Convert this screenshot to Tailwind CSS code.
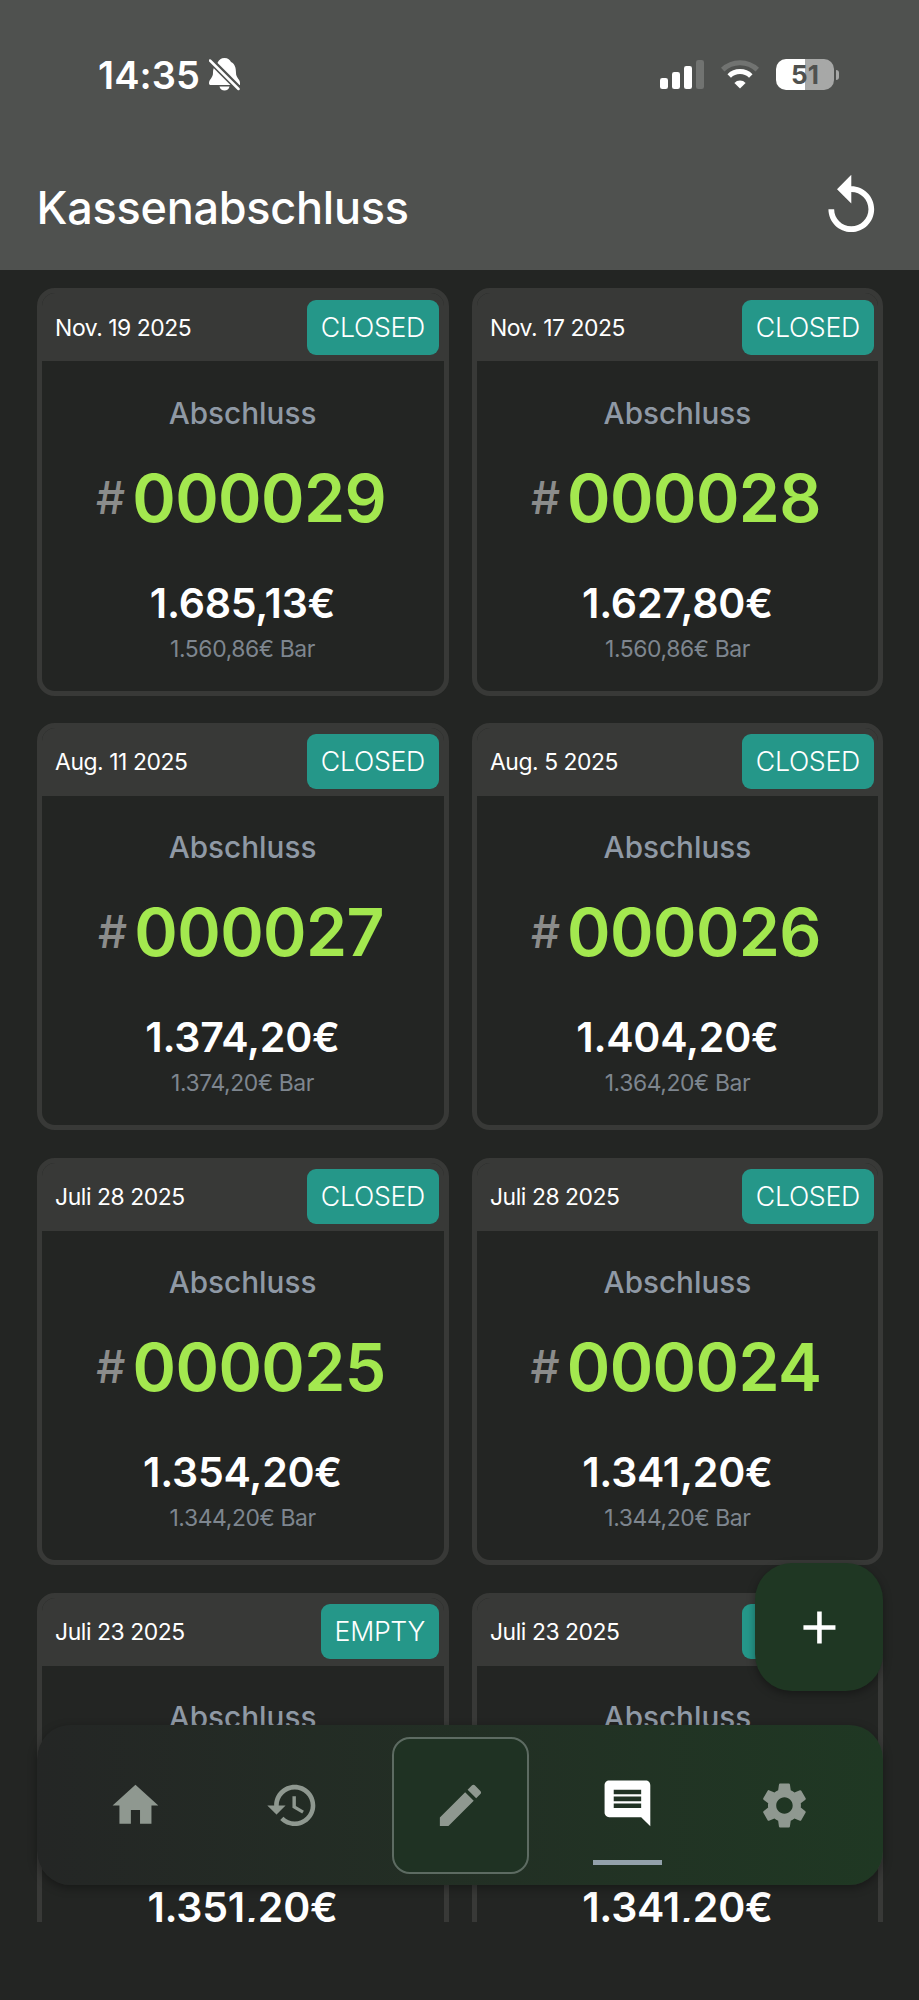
<!DOCTYPE html>
<html lang="de">
<head>
  <meta charset="UTF-8" />
  <meta name="viewport" content="width=device-width, initial-scale=1.0" />
  <title>Kassenabschluss</title>
  <script src="https://cdn.jsdelivr.net/npm/@tailwindcss/browser@4"></script>
</head>
<body class="bg-[#232523] font-['Inter',sans-serif] text-white h-[2000px] overflow-hidden relative">

  <header class="bg-[#4f514f] h-[270px] flex flex-col">
    <!-- Status bar -->
    <div class="flex items-center justify-between pt-[52px] pl-[98px] pr-[80px] h-[97px]">
      <div class="flex items-center gap-[9px]">
        <span class="w-[102px] text-[38px] leading-[46px] font-semibold tracking-[0.1px]">14:35</span>
        <svg class="w-[31px] h-[33px]" viewBox="0 0 31 33" fill="#fff">
          <path d="M15.5 0C19 0 21 2 22 4c4 2 5 6 5 11 0 5 4 6 4 10v2H2c-1.500 0-2-.6-2-2 0-4 4-5 4-10 0-1.500 0-3 .6-4.500L9 4c1-2 3-4 6.500-4z" />
          <path d="M10.500 28.500h10c-.5 2.500-2.500 4-5 4s-4.500-1.500-5-4z" />
          <path d="M-1 0L32 33" stroke="#4f514f" stroke-width="6.500" />
          <path d="M1 2.500L29.500 31" stroke="#fff" stroke-width="2.500" stroke-linecap="round" />
        </svg>
      </div>
      <div class="flex items-center">
        <svg class="w-[44px] h-[29px] mr-[17px]" viewBox="0 0 44 29" fill="#fff">
          <rect x="0" y="18" width="8" height="11" rx="2.300" />
          <rect x="12" y="12" width="8" height="17" rx="2.300" />
          <rect x="24" y="6" width="8" height="23" rx="2.300" />
          <rect x="36" y="0" width="8" height="29" rx="2.300" fill="#717371" />
        </svg>
        <svg class="w-[38px] h-[29px] mr-[17px]" viewBox="0 0 38 29" fill="none">
          <path d="M1.700 9.600a25 25 0 0 1 34.600 0" stroke="#717371" stroke-width="5" />
          <path d="M8.200 16a15.500 15.500 0 0 1 21.600 0" stroke="#fff" stroke-width="5" />
          <path d="M19 28.500l-5.600-5.600a8 8 0 0 1 11.200 0z" fill="#fff" />
        </svg>
        <div class="flex items-center gap-[2px]">
          <div class="w-[58px] h-[31px] rounded-[10px] bg-linear-to-r from-white from-50% to-[#a7a8a7] to-50% flex items-center justify-center text-[26px] leading-none font-bold text-[#4f514f]">51</div>
          <div class="w-[3px] h-[10px] rounded-r-full bg-[#a7a8a7]"></div>
        </div>
      </div>
    </div>
    <!-- Title -->
    <div class="flex items-center justify-between h-[69px] mt-[75px] pl-[36.500px] pr-[33px]">
      <h1 class="pt-px text-[45px] leading-[69px] font-[450] tracking-[-0.250px]">Kassenabschluss</h1>
      <svg class="w-[68.600px] h-[68.600px]" viewBox="0 0 24 24" fill="#fff"><path d="M12 5V1L7 6l5 5V7c3.310 0 6 2.690 6 6s-2.690 6-6 6-6-2.690-6-6H4c0 4.420 3.580 8 8 8s8-3.580 8-8-3.580-8-8-8z" /></svg>
    </div>
  </header>

  <main class="h-[1651.700px] overflow-hidden pt-[18.300px] pl-[36.600px] pr-[35.600px]">
    <div id="list" class="grid grid-cols-2 gap-x-[23px] gap-y-[27.400px]"></div>
  </main>

  <!-- Add button -->
  <button class="absolute left-[755px] top-[1563px] size-[128px] rounded-[37px] bg-[#1f3723] flex items-center justify-center shadow-[0_3px_8px_rgba(0,0,0,0.35)]">
    <svg class="size-[54.900px]" viewBox="0 0 24 24" fill="#fff"><path d="M19 13h-6v6h-2v-6H5v-2h6V5h2v6h6v2z" /></svg>
  </button>

  <!-- Bottom navigation -->
  <nav class="absolute left-[37px] top-[1725px] w-[846px] h-[160px] rounded-[34px] bg-linear-to-r from-[#242625] to-[#1f3823] flex items-center justify-center gap-[41px] text-[#8f9890] shadow-[0_3px_10px_rgba(0,0,0,0.35)]">
    <a class="w-[116px] flex justify-center">
      <svg class="size-[54.900px]" viewBox="0 0 24 24" fill="currentColor"><path d="M10 20v-6h4v6h5v-8h3L12 3 2 12h3v8z" /></svg>
    </a>
    <a class="w-[116px] flex justify-center">
      <svg class="size-[54.900px]" viewBox="0 0 24 24" fill="currentColor"><path d="M13 3c-4.970 0-9 4.030-9 9H1l3.890 3.890.07.14L9 12H6c0-3.870 3.130-7 7-7s7 3.130 7 7-3.130 7-7 7c-1.930 0-3.680-.79-4.940-2.060l-1.420 1.420C8.270 19.990 10.510 21 13 21c4.970 0 9-4.030 9-9s-4.030-9-9-9zm-1 5v5l4.280 2.540.72-1.210-3.500-2.080V8H12z" /></svg>
    </a>
    <a class="size-[137px] rounded-[18px] border-2 border-[#5d6b62] bg-[#1f3223] flex items-center justify-center">
      <svg class="size-[54.900px]" viewBox="0 0 24 24" fill="currentColor"><path d="M3 17.250V21h3.750L17.810 9.940l-3.750-3.750L3 17.250zM20.710 7.040c.39-.39.39-1.020 0-1.410l-2.340-2.340c-.39-.39-1.020-.39-1.410 0l-1.830 1.830 3.750 3.750 1.830-1.830z" /></svg>
    </a>
    <a class="w-[116px] self-start mt-[50.500px] flex flex-col items-center gap-[29.500px] text-white">
      <svg class="size-[54.900px]" viewBox="0 0 24 24" fill="currentColor"><path d="M21.990 4c0-1.100-.89-2-1.990-2H4c-1.100 0-2 .9-2 2v12c0 1.100.9 2 2 2h14l4 4-.01-18zM18 14H6v-2h12v2zm0-3H6V9h12v2zm0-3H6V6h12v2z" /></svg>
      <span class="w-[69px] h-[5px] bg-[#93a1ab]"></span>
    </a>
    <a class="w-[116px] flex justify-center">
      <svg class="size-[54.900px]" viewBox="0 0 24 24" fill="currentColor"><path d="M19.140 12.940c.04-.3.06-.61.06-.94 0-.32-.02-.64-.07-.94l2.030-1.580c.18-.14.23-.41.12-.61l-1.920-3.320c-.12-.22-.37-.29-.59-.22l-2.390.96c-.5-.38-1.030-.7-1.620-.94l-.36-2.540c-.04-.24-.24-.41-.48-.41h-3.840c-.24 0-.43.17-.47.41l-.36 2.540c-.59.24-1.130.57-1.620.94l-2.390-.96c-.22-.08-.47 0-.59.22L2.740 8.870c-.12.21-.08.47.12.61l2.030 1.580c-.05.3-.09.63-.09.94s.02.64.07.94l-2.030 1.580c-.18.14-.23.41-.12.61l1.920 3.320c.12.22.37.29.59.22l2.390-.96c.5.38 1.030.7 1.620.94l.36 2.540c.05.24.24.41.48.41h3.840c.24 0 .44-.17.47-.41l.36-2.540c.59-.24 1.130-.56 1.620-.94l2.390.96c.22.08.47 0 .59-.22l1.920-3.320c.12-.22.07-.47-.12-.61l-2.010-1.580zM12 15.600c-1.980 0-3.600-1.620-3.600-3.600s1.620-3.600 3.600-3.600 3.600 1.620 3.600 3.600-1.620 3.600-3.600 3.600z" /></svg>
    </a>
  </nav>

  <script>
    const closings = [
      { date: "Nov. 19 2025", status: "CLOSED", no: "000029", total: "1.685,13€", cash: "1.560,86€" },
      { date: "Nov. 17 2025", status: "CLOSED", no: "000028", total: "1.627,80€", cash: "1.560,86€" },
      { date: "Aug. 11 2025", status: "CLOSED", no: "000027", total: "1.374,20€", cash: "1.374,20€" },
      { date: "Aug. 5 2025", status: "CLOSED", no: "000026", total: "1.404,20€", cash: "1.364,20€" },
      { date: "Juli 28 2025", status: "CLOSED", no: "000025", total: "1.354,20€", cash: "1.344,20€" },
      { date: "Juli 28 2025", status: "CLOSED", no: "000024", total: "1.341,20€", cash: "1.344,20€" },
      { date: "Juli 23 2025", status: "EMPTY", no: "000023", total: "1.351,20€", cash: "1.351,20€" },
      { date: "Juli 23 2025", status: "CLOSED", no: "000022", total: "1.341,20€", cash: "1.341,20€" }
    ];

    document.getElementById("list").innerHTML = closings.map(c => `
      <div class="h-[407.400px] rounded-[18px] border-[5px] border-[#383937] overflow-hidden flex flex-col items-center whitespace-nowrap">
        <div class="w-full h-[68px] shrink-0 bg-[#383937] flex items-start justify-between pl-[13.500px] pr-[4.500px] pt-[6.400px]">
          <span class="pt-px text-[22.900px] leading-[55px] tracking-[-0.450px]">${c.date}</span>
          <span class="h-[55px] rounded-[9px] bg-[#259789] px-[14px] text-[26.700px] leading-[54px] font-[350] tracking-[-0.300px]">${c.status}</span>
        </div>
        <div class="mt-[33.400px] text-[29.700px] leading-[36px] font-[450] text-[#8f99a5]">Abschluss</div>
        <div class="mt-[28px] mr-[3px] flex items-center gap-[7px]">
          <span class="text-[45.700px] leading-[78px] font-[550] text-[#8b8c8b]">#</span>
          <span class="text-[66px] leading-[78px] font-semibold tracking-[-0.600px] text-[#a3e84f]">${c.no}</span>
        </div>
        <div class="mt-[41px] text-[41.100px] leading-[50px] font-semibold tracking-[-0.250px]">${c.total}</div>
        <div class="mt-[7px] text-[22.900px] leading-[28px] tracking-[-0.400px] text-[#7e868f]">${c.cash} Bar</div>
      </div>
    `).join("");
  </script>

</body>
</html>
